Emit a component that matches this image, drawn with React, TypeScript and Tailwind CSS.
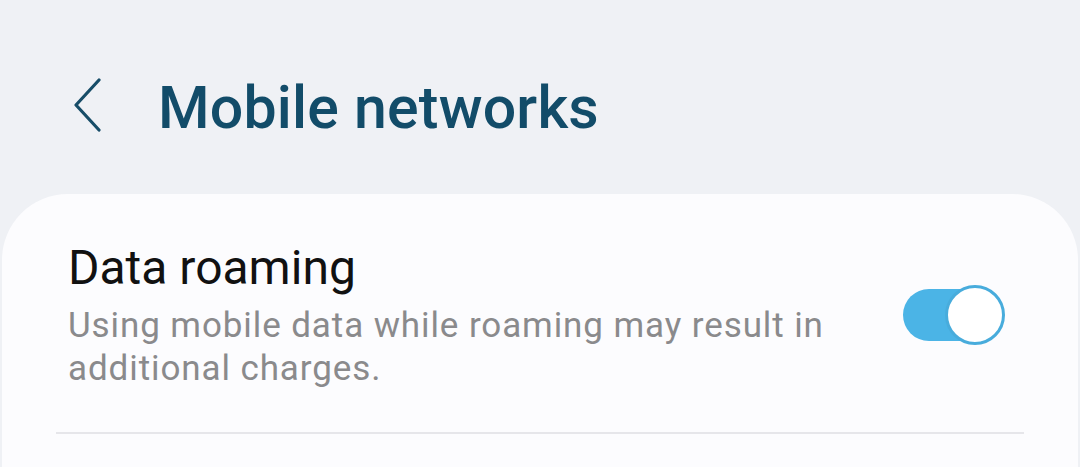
import React from "react";

function BackChevron() {
  return (
    <svg width="32" height="54" viewBox="0 0 32 54" fill="none" className="block">
      <path
        d="M28 2 L5 27 L28 52"
        stroke="#174d68"
        strokeWidth="3.2"
        strokeLinecap="round"
        strokeLinejoin="round"
      />
    </svg>
  );
}

function Toggle({ on }: { on: boolean }) {
  return (
    <div className="relative w-[102px] h-[60px] shrink-0">
      <div
        className={`absolute left-0 top-[4px] w-[92px] h-[52px] rounded-full ${
          on ? "bg-[#4bb4e6]" : "bg-[#c8c8c8]"
        }`}
      />
      <div className="absolute right-0 top-0 w-[60px] h-[60px] rounded-full bg-white border-[3px] border-[#48acdc]" />
    </div>
  );
}

export default function App() {
  return (
    <div
      className="w-[1080px] h-[467px] overflow-hidden bg-[#eff1f5]"
      style={{ fontFamily: "Roboto, 'Noto Sans', sans-serif" }}
    >
      <header className="h-[194px] flex items-start pt-[78px] pl-[71px]">
        <BackChevron />
        <h1 className="ml-[55px] text-[59px] leading-[60px] font-medium text-[#124c69] tracking-[0.2px]">
          Mobile networks
        </h1>
      </header>

      <section className="mx-[2px] h-[300px] rounded-t-[66px] bg-[#fcfcfe]">
        <div className="flex items-center pl-[66px] pr-[73px] pt-[45px]">
          <div className="flex-1 min-w-0 pr-[40px]">
            <div className="text-[48px] leading-[57px] text-[#111111]">
              Data roaming
            </div>
            <div className="mt-[8px] text-[35px] leading-[43px] text-[#8a8a8c] tracking-[0.9px]">
              Using mobile data while roaming may result in additional charges.
            </div>
          </div>
          <Toggle on />
        </div>
        <div className="mx-[54px] mt-[42px] h-[2px] bg-[#e6e6ea]" />
      </section>
    </div>
  );
}
